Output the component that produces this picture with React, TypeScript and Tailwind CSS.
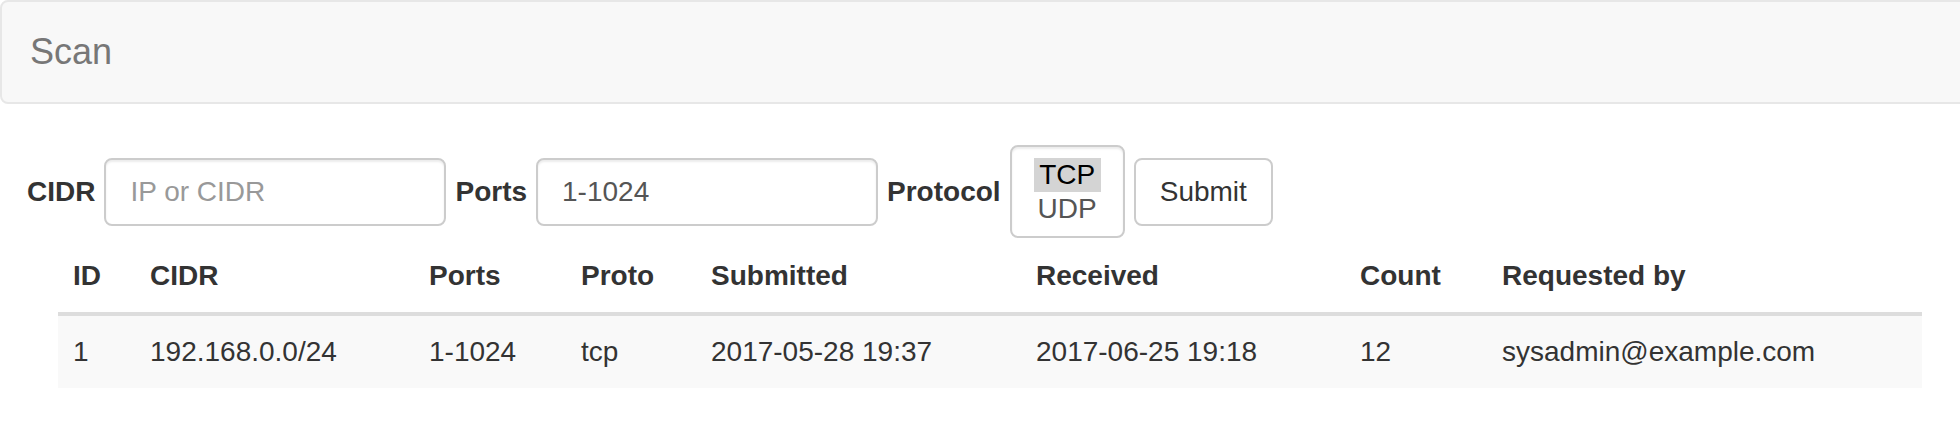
const columns = [
  { label: "ID", width: "w-[77px]" },
  { label: "CIDR", width: "w-[279px]" },
  { label: "Ports", width: "w-[152px]" },
  { label: "Proto", width: "w-[130px]" },
  { label: "Submitted", width: "w-[325px]" },
  { label: "Received", width: "w-[324px]" },
  { label: "Count", width: "w-[142px]" },
  { label: "Requested by", width: "w-[435px]" },
];

const scans = [
  {
    id: 1,
    cidr: "192.168.0.0/24",
    ports: "1-1024",
    proto: "tcp",
    submitted: "2017-05-28 19:37",
    received: "2017-06-25 19:18",
    count: 12,
    requestedBy: "sysadmin@example.com",
  },
];

function Field({ label, placeholder, value }: { label: string; placeholder?: string; value?: string }) {
  return (
    <>
      <label className="font-bold text-[#333]">{label}</label>
      <div className="flex h-[68px] w-[342px] items-center rounded-[8px] border-2 border-[#ccc] bg-white px-[24px] shadow-[inset_0_2px_2px_rgba(0,0,0,0.075)]">
        {value ? <span className="text-[#555]">{value}</span> : <span className="text-[#999]">{placeholder}</span>}
      </div>
    </>
  );
}

export default function App() {
  return (
    <div className="w-[1960px] overflow-hidden bg-white font-['Liberation_Sans',Arial,sans-serif] text-[28px] leading-[40px] text-[#333]">
      <nav className="box-border h-[104px] w-[2000px] rounded-[8px] border-2 border-[#e7e7e7] bg-[#f8f8f8]">
        <div className="px-[28px] py-[30px] text-[36px] leading-[40px] text-[#777]">Scan</div>
      </nav>

      <form className="mt-[41px] flex h-[93px] items-center gap-[9px] pl-[27px]">
        <Field label="CIDR" placeholder="IP or CIDR" />
        <Field label="Ports" value="1-1024" />
        <label className="font-bold text-[#333]">Protocol</label>
        <div className="box-border h-[93px] rounded-[8px] border-2 border-[#ccc] bg-white px-[22px] pt-[11px] shadow-[inset_0_2px_2px_rgba(0,0,0,0.075)]">
          <div className="bg-[#d4d4d4] px-[4px] text-center leading-[34px] text-black">TCP</div>
          <div className="px-[4px] text-center leading-[34px] text-[#555]">UDP</div>
        </div>
        <button
          type="button"
          className="box-border h-[68px] rounded-[8px] border-2 border-[#ccc] bg-white px-[24px] text-[#333]"
        >
          Submit
        </button>
      </form>

      <table className="ml-[58px] mt-[2px] w-[1863px] table-fixed border-collapse">
        <thead>
          <tr>
            {columns.map((c) => (
              <th
                key={c.label}
                className={`${c.width} border-b-4 border-[#ddd] px-[15px] py-[16px] text-left font-bold leading-[40px]`}
              >
                {c.label}
              </th>
            ))}
          </tr>
        </thead>
        <tbody>
          {scans.map((s) => (
            <tr key={s.id} className="bg-[#f9f9f9]">
              <td className="px-[15px] py-[16px]">{s.id}</td>
              <td className="px-[15px] py-[16px]">{s.cidr}</td>
              <td className="px-[15px] py-[16px]">{s.ports}</td>
              <td className="px-[15px] py-[16px]">{s.proto}</td>
              <td className="px-[15px] py-[16px]">{s.submitted}</td>
              <td className="px-[15px] py-[16px]">{s.received}</td>
              <td className="px-[15px] py-[16px]">{s.count}</td>
              <td className="px-[15px] py-[16px]">{s.requestedBy}</td>
            </tr>
          ))}
        </tbody>
      </table>
    </div>
  );
}
